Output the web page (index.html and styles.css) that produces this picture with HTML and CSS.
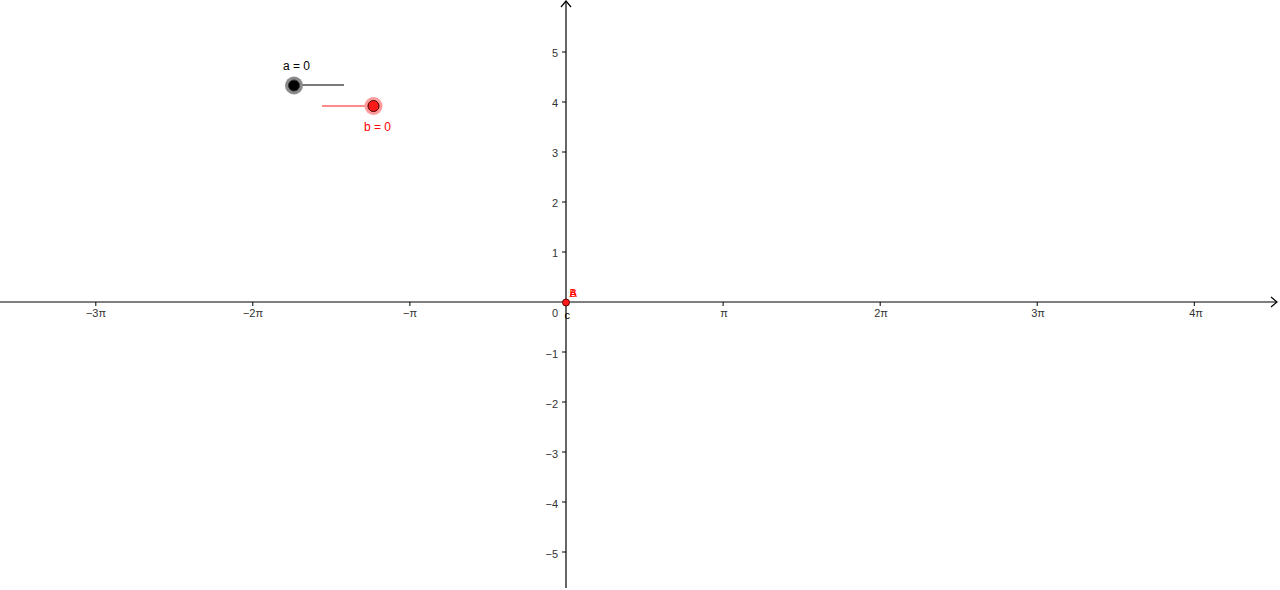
FILE: index.html
```html
<!DOCTYPE html>
<html>
<head>
<meta charset="utf-8">
<link rel="stylesheet" href="styles.css">
</head>
<body>
<div class="canvas">
<svg class="graph" width="1280" height="590" viewBox="0 0 1280 590" xmlns="http://www.w3.org/2000/svg">
  <!-- axes -->
  <line class="axis" x1="0" y1="302" x2="1277" y2="302"/>
  <polyline class="axis" points="1271,297 1277,302 1271,307"/>
  <line class="axis" x1="566" y1="1" x2="566" y2="588"/>
  <polyline class="axis" points="561,7 566,1 571,7"/>

  <!-- x ticks -->
  <g class="tick">
    <line x1="95.8" y1="302" x2="95.8" y2="306"/>
    <line x1="252.8" y1="302" x2="252.8" y2="306"/>
    <line x1="409.9" y1="302" x2="409.9" y2="306"/>
    <line x1="723.1" y1="302" x2="723.1" y2="306"/>
    <line x1="880.2" y1="302" x2="880.2" y2="306"/>
    <line x1="1037.2" y1="302" x2="1037.2" y2="306"/>
    <line x1="1194.3" y1="302" x2="1194.3" y2="306"/>
  </g>
  <g class="lbl xl">
    <text x="96" y="317">−3π</text>
    <text x="253" y="317">−2π</text>
    <text x="410" y="317">−π</text>
    <text x="724" y="317">π</text>
    <text x="881" y="317">2π</text>
    <text x="1038" y="317">3π</text>
    <text x="1196" y="317">4π</text>
  </g>
  <text class="lbl" x="552" y="317">0</text>

  <!-- y ticks -->
  <g class="tick">
    <line x1="562" y1="52" x2="566" y2="52"/>
    <line x1="562" y1="102" x2="566" y2="102"/>
    <line x1="562" y1="152" x2="566" y2="152"/>
    <line x1="562" y1="202" x2="566" y2="202"/>
    <line x1="562" y1="252" x2="566" y2="252"/>
    <line x1="562" y1="352" x2="566" y2="352"/>
    <line x1="562" y1="402" x2="566" y2="402"/>
    <line x1="562" y1="452" x2="566" y2="452"/>
    <line x1="562" y1="502" x2="566" y2="502"/>
    <line x1="562" y1="552" x2="566" y2="552"/>
  </g>
  <g class="lbl yl">
    <text x="558" y="57">5</text>
    <text x="558" y="107">4</text>
    <text x="558" y="157">3</text>
    <text x="558" y="207">2</text>
    <text x="558" y="257">1</text>
    <text x="558" y="358">−1</text>
    <text x="558" y="408">−2</text>
    <text x="558" y="458">−3</text>
    <text x="558" y="508">−4</text>
    <text x="558" y="558">−5</text>
  </g>

  <!-- slider a -->
  <line class="slider-a" x1="294" y1="85" x2="344" y2="85"/>
  <circle class="halo-a" cx="294" cy="85.5" r="9"/>
  <circle class="pt-a" cx="294" cy="85.5" r="5.5"/>
  <text class="name" x="283" y="70">a = 0</text>

  <!-- slider b -->
  <line class="slider-b" x1="322" y1="106" x2="373" y2="106"/>
  <circle class="halo-b" cx="373.5" cy="106" r="9"/>
  <circle class="pt-b" cx="373.5" cy="106" r="5.5"/>
  <text class="name red" x="364" y="131">b = 0</text>

  <!-- origin points -->
  <circle class="pt-o" cx="566" cy="302.5" r="3.5"/>
  <text class="name red small" x="569.5" y="297">A</text>
  <text class="name red small" x="569.5" y="297">B</text>
  <text class="name small" x="564.5" y="319">c</text>
</svg>
</div>
</body>
</html>
```
FILE: styles.css
```css
html, body {
  margin: 0;
  padding: 0;
  background: #ffffff;
  overflow: hidden;
}
.canvas {
  width: 1280px;
  height: 590px;
}
.graph {
  display: block;
  font-family: "Liberation Sans", Arial, sans-serif;
}
.axis {
  stroke: #000;
  stroke-width: 1.2;
  fill: none;
}
.tick line {
  stroke: #000;
  stroke-width: 1;
}
.lbl {
  font-size: 11px;
  fill: #333;
}
.xl text {
  text-anchor: middle;
}
.yl text {
  text-anchor: end;
}
.name {
  font-size: 12px;
  fill: #000;
}
.name.red {
  fill: #ff0000;
}
.name.small {
  font-size: 11px;
}
.slider-a {
  stroke: #7a7a7a;
  stroke-width: 2;
}
.slider-b {
  stroke: #ff8a8a;
  stroke-width: 2;
}
.halo-a {
  fill: #8a8a8a;
}
.pt-a {
  fill: #000;
  stroke: #333;
  stroke-width: 1;
}
.halo-b {
  fill: #ff9a9a;
}
.pt-b {
  fill: #ff1a1a;
  stroke: #400;
  stroke-width: 1;
}
.pt-o {
  fill: #ff1a1a;
  stroke: #600;
  stroke-width: 1;
}
```
